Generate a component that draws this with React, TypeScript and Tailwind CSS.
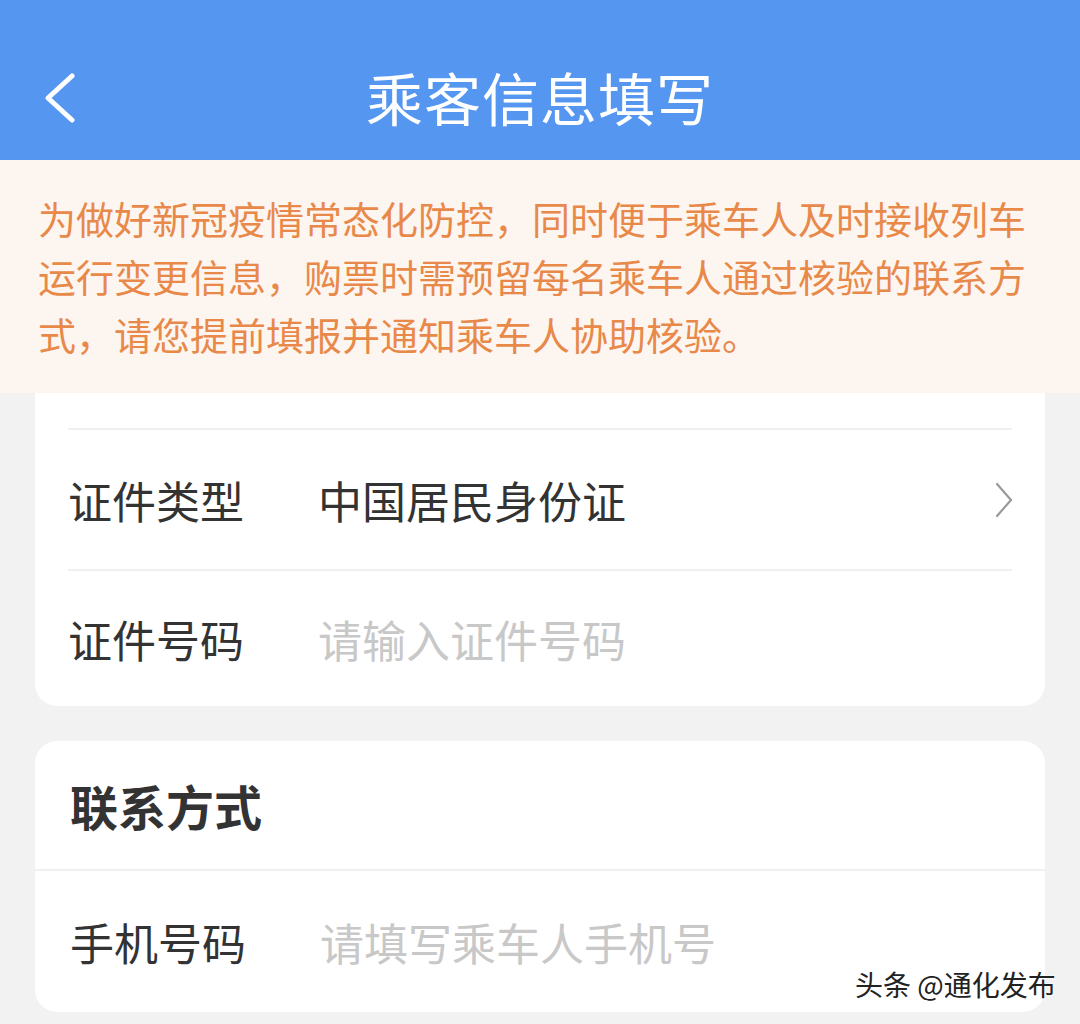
const font = { fontFamily: '"Noto Sans CJK SC", "Noto Sans", sans-serif' }

function Row({ label, value, placeholder, arrow, h }: { label: string; value?: string; placeholder?: string; arrow?: boolean; h: string }) {
  return (
    <div className={`flex items-center ${h}`}>
      <span className="w-[250px] shrink-0 text-[44px] text-[#333333]">{label}</span>
      <span className={`flex-1 text-[44px] ${value ? 'text-[#333333]' : 'text-[#c8c8c8]'}`}>{value ?? placeholder}</span>
      {arrow && (
        <svg width="20" height="36" viewBox="0 0 20 36" fill="none" className="mr-[-2px]">
          <path d="M3 2 L17 18 L3 34" stroke="#9a9a9a" strokeWidth="2.2" strokeLinecap="round" strokeLinejoin="round" />
        </svg>
      )}
    </div>
  )
}

export default function App() {
  return (
    <div style={font} className="relative w-[1080px] h-[1024px] overflow-hidden bg-[#f2f2f2]">
      {/* header */}
      <div className="relative h-[160px] bg-[#5597f0] flex items-center justify-center pt-[34px]">
        <svg width="40" height="50" viewBox="0 0 40 50" fill="none" className="absolute left-[40px] top-[73px]">
          <path d="M32 3 L8 25 L32 47" stroke="white" strokeWidth="5" strokeLinecap="round" strokeLinejoin="round" />
        </svg>
        <h1 className="text-[57px] text-white font-normal tracking-[1px]">乘客信息填写</h1>
      </div>

      {/* notice */}
      <div className="bg-[#fdf6f0] px-[38px] pt-[29px] pb-[30px] text-[38px] leading-[58px] text-[#e8894a]">
        为做好新冠疫情常态化防控，同时便于乘车人及时接收列车运行变更信息，购票时需预留每名乘车人通过核验的联系方式，请您提前填报并通知乘车人协助核验。
      </div>

      {/* passenger card */}
      <div className="mx-[35px] bg-white rounded-b-[22px] px-[33px]">
        <div className="h-[37px] border-b-2 border-[#f0f0f0]" />
        <div className="border-b-2 border-[#f0f0f0]">
          <Row label="证件类型" value="中国居民身份证" arrow h="h-[139px]" />
        </div>
        <Row label="证件号码" placeholder="请输入证件号码" h="h-[135px]" />
      </div>

      {/* contact card */}
      <div className="mx-[35px] mt-[35px] bg-white rounded-[22px]">
        <div className="h-[130px] flex items-center px-[35px] border-b-2 border-[#f0f0f0]">
          <span className="text-[48px] font-bold text-[#333333]">联系方式</span>
        </div>
        <div className="px-[35px]">
          <Row label="手机号码" placeholder="请填写乘车人手机号" h="h-[141px]" />
        </div>
      </div>

      {/* watermark */}
      <div className="absolute left-[855px] top-[963px] text-[28px] text-[#222] [text-shadow:0_0_2px_white,0_0_2px_white]">
        头条 @通化发布
      </div>
    </div>
  )
}
